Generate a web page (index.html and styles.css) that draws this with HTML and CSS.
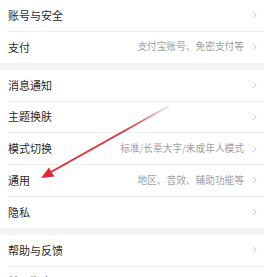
FILE: index.html
```html
<!DOCTYPE html>
<html lang="zh-CN">
<head>
<meta charset="utf-8">
<link rel="stylesheet" href="styles.css">
</head>
<body>
<div class="page">
  <section class="group">
    <div class="row"><span class="title">账号与安全</span><span class="right"><svg class="chev" viewBox="0 0 5 8"><polyline points="0.8,0.8 4.2,4 0.8,7.2"/></svg></span></div>
    <div class="row"><span class="title">支付</span><span class="right"><span class="sub">支付宝账号、免密支付等</span><svg class="chev" viewBox="0 0 5 8"><polyline points="0.8,0.8 4.2,4 0.8,7.2"/></svg></span></div>
  </section>
  <section class="group">
    <div class="row"><span class="title">消息通知</span><span class="right"><svg class="chev" viewBox="0 0 5 8"><polyline points="0.8,0.8 4.2,4 0.8,7.2"/></svg></span></div>
    <div class="row"><span class="title">主题换肤</span><span class="right"><svg class="chev" viewBox="0 0 5 8"><polyline points="0.8,0.8 4.2,4 0.8,7.2"/></svg></span></div>
    <div class="row"><span class="title">模式切换</span><span class="right"><span class="sub">标准/长辈大字/未成年人模式</span><svg class="chev" viewBox="0 0 5 8"><polyline points="0.8,0.8 4.2,4 0.8,7.2"/></svg></span></div>
    <div class="row"><span class="title">通用</span><span class="right"><span class="sub">地区、音效、辅助功能等</span><svg class="chev" viewBox="0 0 5 8"><polyline points="0.8,0.8 4.2,4 0.8,7.2"/></svg></span></div>
    <div class="row"><span class="title">隐私</span><span class="right"><svg class="chev" viewBox="0 0 5 8"><polyline points="0.8,0.8 4.2,4 0.8,7.2"/></svg></span></div>
  </section>
  <section class="group">
    <div class="row"><span class="title">帮助与反馈</span><span class="right"><svg class="chev" viewBox="0 0 5 8"><polyline points="0.8,0.8 4.2,4 0.8,7.2"/></svg></span></div>
    <div class="row"><span class="title">关于淘宝</span><span class="right"><svg class="chev" viewBox="0 0 5 8"><polyline points="0.8,0.8 4.2,4 0.8,7.2"/></svg></span></div>
  </section>
  <svg class="arrow" width="264" height="277" viewBox="0 0 264 277">
    <defs>
      <linearGradient id="fade" x1="167" y1="107" x2="42" y2="177" gradientUnits="userSpaceOnUse">
        <stop offset="0" stop-color="#e8e8e8"/>
        <stop offset="0.18" stop-color="#e07a80"/>
        <stop offset="0.35" stop-color="#e0323a"/>
        <stop offset="1" stop-color="#e02a32"/>
      </linearGradient>
    </defs>
    <line x1="168" y1="106.5" x2="50" y2="172.5" stroke="url(#fade)" stroke-width="2" stroke-linecap="round"/>
    <polygon points="41,178 49,167.5 51.5,172.3 54.5,176.5" fill="#e02a32"/>
  </svg>
</div>
</body>
</html>
```

FILE: styles.css
```css
html, body {
  margin: 0;
  padding: 0;
  background: #f3f3f3;
}
.page {
  position: relative;
  width: 264px;
  height: 277px;
  overflow: hidden;
  display: flex;
  flex-direction: column;
  gap: 7.25px;
  font-family: "Noto Sans CJK SC", "Noto Sans", sans-serif;
}
.group {
  background: #fff;
  display: flex;
  flex-direction: column;
}
.row {
  position: relative;
  height: 30.75px;
  display: flex;
  align-items: center;
  justify-content: space-between;
  padding: 0 7px 0 8px;
  flex-shrink: 0;
}
.row + .row {
  border-top: 1px solid #efefef;
}
.row + .row::before {
  content: "";
  position: absolute;
  left: 0;
  top: -1px;
  width: 8px;
  height: 1px;
  background: #fff;
}
.title {
  font-size: 11px;
  color: #2a2a2a;
  line-height: 1;
}
.right {
  display: flex;
  align-items: center;
  gap: 8px;
}
.sub {
  font-size: 9.7px;
  color: #a0a0a0;
  line-height: 1;
}
.chev {
  width: 5px;
  height: 8px;
  fill: none;
  stroke: #c4c4c4;
  stroke-width: 0.9;
}
.arrow {
  position: absolute;
  left: 0;
  top: 0;
  pointer-events: none;
}
```
